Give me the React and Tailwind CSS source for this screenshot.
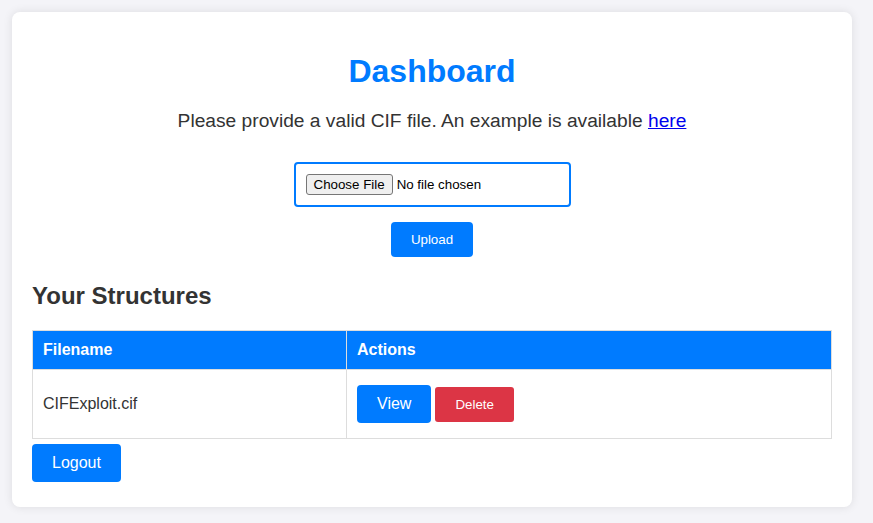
import React from 'react'

export default function App() {
  const files = ['CIFExploit.cif']

  return (
    <div className="min-h-screen bg-[#f4f4f8] p-3 font-['Liberation_Sans',Arial,sans-serif] text-[#333]">
      <div className="w-[840px] bg-white rounded-lg shadow-[0_0_10px_rgba(0,0,0,0.1)] px-5 pt-5 pb-[25px]">
        <h1 className="mt-[21px] text-center text-[32px] leading-[37px] font-bold text-[#007bff]">Dashboard</h1>
        <p className="mt-5 text-center text-[19.2px] leading-[22px]">
          Please provide a valid CIF file. An example is available{' '}
          <a href="#" className="text-[#0000ee] underline">here</a>
        </p>

        <div className="mt-[30px] flex flex-col items-center">
          <div className="border-2 border-[#007bff] rounded p-[10px]">
            <input
              type="file"
              className="block w-[253px] h-[21px] text-[13.33px] leading-[21px] text-black file:mr-1 file:border file:border-[#767676] file:bg-[#efefef] file:rounded-[3px] file:px-[7px] file:py-0 file:leading-[19px] file:text-black"
            />
          </div>
          <button className="mt-[15px] bg-[#007bff] text-white text-[13.33px] leading-[15px] px-5 py-[10px] rounded">
            Upload
          </button>
        </div>

        <h2 className="mt-[25px] text-[24px] leading-[28px] font-bold">Your Structures</h2>

        <table className="mt-5 w-full border-collapse text-[16px]">
          <thead>
            <tr className="bg-[#007bff] text-white">
              <th className="w-[314px] border border-[#ddd] px-[10px] py-[10px] text-left font-bold leading-[18px]">Filename</th>
              <th className="border border-[#ddd] px-[10px] py-[10px] text-left font-bold leading-[18px]">Actions</th>
            </tr>
          </thead>
          <tbody>
            {files.map((f) => (
              <tr key={f}>
                <td className="border border-[#ddd] px-[10px] py-[10px] leading-[18px]">{f}</td>
                <td className="border border-[#ddd] px-[10px] py-[10px]">
                  <div className="flex items-center gap-1 my-[5px]">
                    <button className="bg-[#007bff] text-white text-[16px] leading-[18px] px-5 py-[10px] rounded">View</button>
                    <button className="bg-[#dc3545] text-white text-[13.33px] leading-[15px] px-5 py-[10px] rounded-[3px]">Delete</button>
                  </div>
                </td>
              </tr>
            ))}
          </tbody>
        </table>

        <button className="mt-[5px] bg-[#007bff] text-white text-[16px] leading-[18px] px-5 py-[10px] rounded">Logout</button>
      </div>
    </div>
  )
}
